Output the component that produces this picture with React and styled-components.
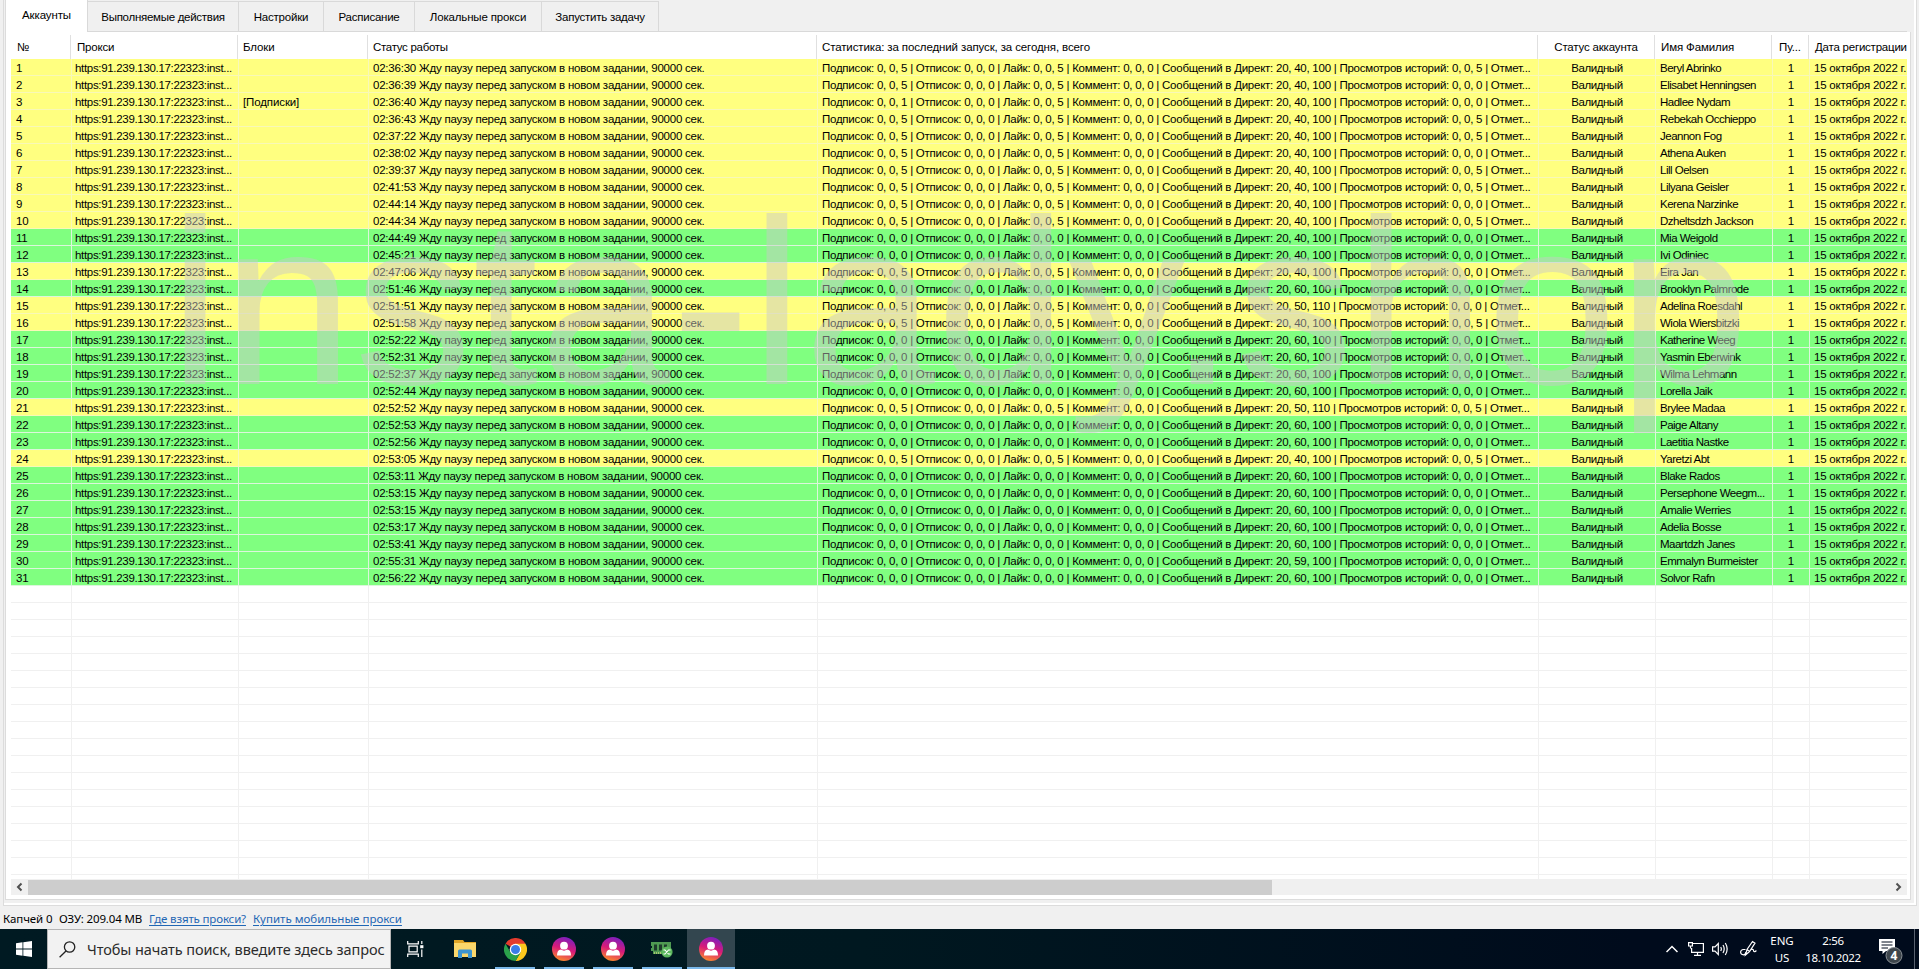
import React from "react";
import styled, { createGlobalStyle } from "styled-components";

const colors = {
  face: "#f0f0f0",
  line: "#dcdcdc",
  yellow: "#ffff80",
  green: "#80ff80",
  link: "#1f66b4",
};

const GlobalStyle = createGlobalStyle`
  * {
    box-sizing: border-box;
  }
  body {
    margin: 0;
    overflow: hidden;
    background: ${colors.face};
    color: #000;
    font-family: "Liberation Sans", Arial, sans-serif;
    font-size: 11.5px;
  }
`;

const Desktop = styled.div`
  position: relative;
  display: flex;
  flex-direction: column;
  width: 1919px;
  height: 969px;
  background: ${colors.face};
`;

const Frame = styled.div`
  height: 906px;
  margin: 0 2px 0 3px;
  padding-left: 1px;
  border: 1px solid ${colors.line};
  border-top: none;
  box-shadow: inset -2px -2px 0 #fff;
`;

const TabStrip = styled.div`
  display: flex;
  align-items: flex-end;
  height: 32px;
`;

const Tab = styled.div`
  display: flex;
  align-items: center;
  justify-content: center;
  width: ${(p) => p.$width}px;
  height: 31px;
  border: 1px solid #d9d9d9;
  border-left: none;
  letter-spacing: ${(p) => p.$spacing || 0}px;
  white-space: nowrap;
`;

const ActiveTab = styled(Tab)`
  height: 32px;
  padding-bottom: 2px;
  background: #fff;
  border: none;
  border-left: 1px solid ${colors.line};
  border-right: 1px solid #d9d9d9;
`;

const TabFill = styled.div`
  width: 1248px;
  border-bottom: 1px solid #d9d9d9;
`;

const Panel = styled.div`
  width: 1906px;
  height: 868px;
  padding: 3px 3px 0 5px;
  background: #fff;
  border: 1px solid ${colors.line};
  border-top: none;
`;

const columns = "60px 167px 130px 449px 721px 117px 117px 37px 98px";

const HeaderRow = styled.div`
  display: grid;
  grid-template-columns: ${columns};
  height: 24px;
`;

const HeaderCell = styled.div`
  padding-left: ${(p) => (p.$center ? 0 : p.$pad || 6)}px;
  border-right: 1px solid #e0e0e0;
  line-height: 24px;
  letter-spacing: ${(p) => p.$spacing || -0.12}px;
  text-align: ${(p) => (p.$center ? "center" : "left")};
  white-space: nowrap;
  overflow: hidden;
  &:last-child {
    border-right: none;
  }
`;

const Body = styled.div`
  height: 820px;
  overflow: hidden;
`;

const Row = styled.div`
  display: grid;
  grid-template-columns: ${columns};
  height: 17px;
  background: ${(p) => colors[p.$tone] || "#fff"};
  --grid: ${(p) =>
    p.$tone === "yellow" ? "#f8f8b8" : p.$tone ? "#dcf6dc" : "#f0f0f0"};
  border-bottom: 1px solid var(--grid);
`;

const Cell = styled.div`
  height: 16px;
  padding-top: 1px;
  padding-left: ${(p) => (p.$center ? 0 : p.$pad || 4)}px;
  border-left: 1px solid var(--grid);
  line-height: 17px;
  letter-spacing: ${(p) => p.$spacing || 0}px;
  text-align: ${(p) => (p.$center ? "center" : "left")};
  white-space: nowrap;
  overflow: hidden;
  &:first-child {
    border-left: none;
  }
`;

const ScrollBar = styled.div`
  display: flex;
  align-items: center;
  width: 1896px;
  height: 16px;
  background: ${colors.face};
`;

const ScrollArrow = styled.svg`
  width: 17px;
  height: 16px;
  fill: none;
  stroke: #505050;
  stroke-width: 2;
`;

const ScrollThumb = styled.div`
  width: 1244px;
  height: 15px;
  margin-right: auto;
  background: #cdcdcd;
`;

const Watermark = styled.div`
  position: absolute;
  left: 169px;
  top: 168px;
  color: rgba(200, 200, 200, 0.48);
  font-size: 235px;
  line-height: 270px;
  letter-spacing: 1.2px;
  white-space: nowrap;
  pointer-events: none;
`;

const StatusBar = styled.div`
  display: flex;
  align-items: center;
  height: 23px;
  padding: 2px 0 0 3px;
  font-family: "Noto Sans", "Open Sans", sans-serif;
  font-size: 11.5px;
`;

const StatusText = styled.span`
  width: ${(p) => p.$width}px;
  letter-spacing: ${(p) => p.$spacing || 0}px;
  white-space: nowrap;
`;

const StatusLink = styled(StatusText)`
  color: ${colors.link};
  text-decoration: underline;
  text-underline-offset: 2px;
`;

const TaskBar = styled.div`
  display: flex;
  height: 40px;
  background: linear-gradient(90deg, #001a22, #001820 45%, #000b1c 85%);
  color: #fff;
  font-family: "Noto Sans", "Open Sans", sans-serif;
`;

const StartButton = styled.div`
  display: flex;
  align-items: center;
  justify-content: center;
  width: 47px;
`;

const SearchBox = styled.div`
  display: flex;
  align-items: center;
  width: 344px;
  padding-left: 11px;
  border: 1px solid #b5b5b5;
  background: #f2f2f2;
  color: #2b2b2b;
  font-size: 14.5px;
  letter-spacing: -0.08px;
  white-space: nowrap;
  svg {
    flex: none;
    margin-right: 11px;
  }
`;

const TaskButton = styled.div`
  display: flex;
  align-items: center;
  justify-content: center;
  width: 48px;
  margin-right: 2px;
  background: ${(p) => (p.$active ? "#33464f" : "transparent")};
`;

const RunningButton = styled(TaskButton)`
  width: ${(p) => (p.$active ? 48 : 40)}px;
  margin: ${(p) => (p.$active ? "0" : "0 5px 0 4px")};
  border-bottom: 2px solid #7ab8ea;
  padding-top: 2px;
`;

const Tray = styled.div`
  display: flex;
  align-items: center;
  margin-left: auto;
`;

const TrayIcon = styled.svg`
  flex: none;
  width: ${(p) => p.$width}px;
  height: 18px;
  margin-right: ${(p) => p.$gap}px;
  fill: none;
  stroke: #fff;
  stroke-width: 1.2;
`;

const TrayText = styled.div`
  width: ${(p) => p.$width}px;
  font-size: 11.5px;
  line-height: 17.5px;
  text-align: center;
  letter-spacing: ${(p) => p.$spacing}px;
`;

const Notifications = styled.svg`
  width: 26px;
  height: 30px;
  margin: 4px 10px 0 8px;
`;

const ShowDesktop = styled.div`
  width: 5px;
  height: 40px;
  border-left: 1px solid #596270;
`;

const tabs = [
  ["Выполняемые действия", 151, -0.28],
  ["Настройки", 85, -0.2],
  ["Расписание", 91, -0.25],
  ["Локальные прокси", 127, -0.15],
  ["Запустить задачу", 117, -0.25],
];

// time, tone, likes, direct, stories, name
const accounts = [
  ["02:36:30", "yellow", 5, "20, 40, 100", 5, "Beryl Abrinko"],
  ["02:36:39", "yellow", 5, "20, 40, 100", 0, "Elisabet Henningsen"],
  ["02:36:40", "yellow", 5, "20, 40, 100", 0, "Hadlee Nydam"],
  ["02:36:43", "yellow", 5, "20, 40, 100", 5, "Rebekah Occhieppo"],
  ["02:37:22", "yellow", 5, "20, 40, 100", 5, "Jeannon Fog"],
  ["02:38:02", "yellow", 5, "20, 40, 100", 0, "Athena Auken"],
  ["02:39:37", "yellow", 5, "20, 40, 100", 5, "Lill Oelsen"],
  ["02:41:53", "yellow", 5, "20, 40, 100", 5, "Lilyana Geisler"],
  ["02:44:14", "yellow", 5, "20, 40, 100", 0, "Kerena Narzinke"],
  ["02:44:34", "yellow", 5, "20, 40, 100", 5, "Dzheltsdzh Jackson"],
  ["02:44:49", "green", 0, "20, 40, 100", 0, "Mia Weigold"],
  ["02:45:21", "green", 0, "20, 40, 100", 0, "Ivi Odiniec"],
  ["02:47:06", "yellow", 5, "20, 40, 100", 0, "Eira Jan"],
  ["02:51:46", "green", 0, "20, 60, 100", 0, "Brooklyn Palmrode"],
  ["02:51:51", "yellow", 5, "20, 50, 110", 0, "Adelina Roesdahl"],
  ["02:51:58", "yellow", 5, "20, 40, 100", 5, "Wiola Wiersbitzki"],
  ["02:52:22", "green", 0, "20, 60, 100", 0, "Katherine Weeg"],
  ["02:52:31", "green", 0, "20, 60, 100", 0, "Yasmin Eberwink"],
  ["02:52:37", "green", 0, "20, 60, 100", 0, "Wilma Lehmann"],
  ["02:52:44", "green", 0, "20, 60, 100", 0, "Lorella Jaik"],
  ["02:52:52", "yellow", 5, "20, 50, 110", 5, "Brylee Madaa"],
  ["02:52:53", "green", 0, "20, 60, 100", 0, "Paige Altany"],
  ["02:52:56", "green", 0, "20, 60, 100", 0, "Laetitia Nastke"],
  ["02:53:05", "yellow", 5, "20, 40, 100", 5, "Yaretzi Abt"],
  ["02:53:11", "green", 0, "20, 60, 100", 0, "Blake Rados"],
  ["02:53:15", "green", 0, "20, 60, 100", 0, "Persephone Weegm..."],
  ["02:53:15", "green", 0, "20, 60, 100", 0, "Amalie Werries"],
  ["02:53:17", "green", 0, "20, 60, 100", 0, "Adelia Bosse"],
  ["02:53:41", "green", 0, "20, 60, 100", 0, "Maartdzh Janes"],
  ["02:55:31", "green", 0, "20, 59, 100", 0, "Emmalyn Burmeister"],
  ["02:56:22", "green", 0, "20, 60, 100", 0, "Solvor Rafn"],
];

const emptyRows = Array.from({ length: 18 });

const AccountRow = ({ account, number }) => {
  const [time, tone, likes, direct, stories, name] = account;
  const follows = number === 3 ? 1 : likes;
  return (
    <Row $tone={tone}>
      <Cell $pad={5} $spacing={-0.2}>{number}</Cell>
      <Cell $pad={3} $spacing={-0.32}>https:91.239.130.17:22323:inst...</Cell>
      <Cell $spacing={-0.12}>{number === 3 ? "[Подписки]" : ""}</Cell>
      <Cell $spacing={-0.22}>
        {time} Жду паузу перед запуском в новом задании, 90000 сек.
      </Cell>
      <Cell $spacing={-0.25}>
        Подписок: 0, 0, {follows} | Отписок: 0, 0, 0 | Лайк: 0, 0, {likes} |
        Коммент: 0, 0, 0 | Сообщений в Директ: {direct} | Просмотров историй:
        0, 0, {stories} | Отмет...
      </Cell>
      <Cell $center $spacing={-0.45}>Валидный</Cell>
      <Cell $spacing={-0.5}>{name}</Cell>
      <Cell $center>1</Cell>
      <Cell $spacing={-0.22}>15 октября 2022 г.</Cell>
    </Row>
  );
};

const WindowsLogo = () => (
  <svg width="16" height="16" viewBox="0 0 16 16" fill="#fff">
    <path d="M0 2.2 6.5 1.3V7.5H0ZM7.3 1.2 16 0V7.5H7.3ZM0 8.4H6.5V14.7L0 13.8ZM7.3 8.4H16V16L7.3 14.8Z" />
  </svg>
);

const SearchIcon = () => (
  <svg width="17" height="17" viewBox="0 0 17 17" fill="none" stroke="#222" strokeWidth="1.3">
    <circle cx="10.6" cy="6" r="5.2" />
    <path d="M7 10 .6 16.2" />
  </svg>
);

const TaskViewIcon = () => (
  <svg width="17" height="16" viewBox="0 0 17 16" fill="none" stroke="#fff" strokeWidth="1.2">
    <path d="M.7 0V2.8H11.3V0M.7 16V13.2H11.3V16M2 5.2H10.2V10.8H2ZM14.8 0V3M14.8 8.5V16" />
    <path d="M13.2 4.2h3.2v3h-3.2Z" fill="#fff" stroke="none" />
  </svg>
);

const ExplorerIcon = () => (
  <svg width="22" height="18" viewBox="0 0 22 18">
    <path d="M0 0H9L10.5 2H22V17H0Z" fill="#e0a526" />
    <path d="M0 3H22V17H0Z" fill="#fbd76b" />
    <path d="M4 18V11Q4 9.5 5.5 9.5H16.5Q18 9.5 18 11V18H14V13.5H8V18Z" fill="#3d94cf" />
  </svg>
);

const ChromeIcon = () => (
  <svg width="23" height="23" viewBox="0 0 24 24">
    <path d="M12 12 1.6 6A12 12 0 0 1 22.4 6Z" fill="#e33b2e" />
    <path d="M12 12V6H22.4A12 12 0 0 1 12 24L17.2 15Z" fill="#fcc81d" />
    <path d="M12 12 17.2 15 12 24A12 12 0 0 1 1.6 6L6.8 15Z" fill="#2aa14b" />
    <circle cx="12" cy="12" r="6" fill="#fff" />
    <circle cx="12" cy="12" r="4.7" fill="#3b7de8" />
  </svg>
);

const ProfileIcon = () => (
  <svg width="24" height="24" viewBox="0 0 24 24">
    <defs>
      <linearGradient id="insta" x1="0.65" y1="0" x2="0.35" y2="1">
        <stop offset="0" stopColor="#7a1fc0" />
        <stop offset="0.5" stopColor="#d81b78" />
        <stop offset="1" stopColor="#fb8a2c" />
      </linearGradient>
    </defs>
    <circle cx="12" cy="12" r="12" fill="url(#insta)" />
    <circle cx="12" cy="8.7" r="3.9" fill="#fff" />
    <path d="M5 18.6Q5 12.6 9 12.6Q12 14.8 15 12.6Q19 12.6 19 18.6Z" fill="#fff" />
  </svg>
);

const MemoryIcon = () => (
  <svg width="22" height="17" viewBox="0 0 22 17">
    <path d="M0 1H20V13H2V10H0V7H1V5H0Z" fill="#4f9a52" />
    <path d="M3 3.5H6V9.5H3ZM8 3.5H11V9.5H8ZM13 3.5H16V9.5H13Z" fill="#1d3a2b" />
    <path d="M3 12H11" stroke="#c6cf7a" strokeWidth="1.5" strokeDasharray="1 1" />
    <circle cx="16" cy="11" r="5.6" fill="#5cb85e" />
    <path d="M12.5 9H14L17.5 13H19.5M12.5 13H14L17.5 9H19.5" stroke="#fff" strokeWidth="1.1" fill="none" />
  </svg>
);

const App = () => {
  return (
    <>
      <GlobalStyle />
      <Desktop>
        <Frame>
          <TabStrip>
            <ActiveTab $width={83} $spacing={-0.1}>Аккаунты</ActiveTab>
            {tabs.map(([label, width, spacing]) => (
              <Tab key={label} $width={width} $spacing={spacing}>
                {label}
              </Tab>
            ))}
            <TabFill />
          </TabStrip>
          <Panel>
            <HeaderRow>
              <HeaderCell>№</HeaderCell>
              <HeaderCell $spacing={-0.2}>Прокси</HeaderCell>
              <HeaderCell $pad={5}>Блоки</HeaderCell>
              <HeaderCell $pad={5} $spacing={-0.3}>Статус работы</HeaderCell>
              <HeaderCell $pad={5}>
                Статистика: за последний запуск, за сегодня, всего
              </HeaderCell>
              <HeaderCell $center $spacing={-0.18}>Статус аккаунта</HeaderCell>
              <HeaderCell>Имя Фамилия</HeaderCell>
              <HeaderCell $center>Пу...</HeaderCell>
              <HeaderCell $spacing={-0.22}>Дата регистрации</HeaderCell>
            </HeaderRow>
            <Body>
              {accounts.map((account, i) => (
                <AccountRow key={i} account={account} number={i + 1} />
              ))}
              {emptyRows.map((_, i) => (
                <Row key={i}>
                  <Cell />
                  <Cell />
                  <Cell />
                  <Cell />
                  <Cell />
                  <Cell />
                  <Cell />
                  <Cell />
                  <Cell />
                </Row>
              ))}
            </Body>
            <ScrollBar>
              <ScrollArrow viewBox="0 0 17 16">
                <path d="M10.5 4.5 7 8 10.5 11.5" />
              </ScrollArrow>
              <ScrollThumb />
              <ScrollArrow viewBox="0 0 17 16">
                <path d="M6.5 4.5 10 8 6.5 11.5" />
              </ScrollArrow>
            </ScrollBar>
          </Panel>
        </Frame>
        <Watermark>insta-lady.shop</Watermark>
        <StatusBar>
          <StatusText $width={56} $spacing={-0.1}>Капчей 0</StatusText>
          <StatusText $width={90} $spacing={-0.15}>ОЗУ: 209.04 MB</StatusText>
          <StatusLink $width={104} $spacing={-0.15}>Где взять прокси?</StatusLink>
          <StatusLink>Купить мобильные прокси</StatusLink>
        </StatusBar>
        <TaskBar>
          <StartButton>
            <WindowsLogo />
          </StartButton>
          <SearchBox>
            <SearchIcon />
            Чтобы начать поиск, введите здесь запрос
          </SearchBox>
          <TaskButton>
            <TaskViewIcon />
          </TaskButton>
          <TaskButton>
            <ExplorerIcon />
          </TaskButton>
          <RunningButton>
            <ChromeIcon />
          </RunningButton>
          <RunningButton>
            <ProfileIcon />
          </RunningButton>
          <RunningButton>
            <ProfileIcon />
          </RunningButton>
          <RunningButton>
            <MemoryIcon />
          </RunningButton>
          <RunningButton $active>
            <ProfileIcon />
          </RunningButton>
          <Tray>
            <TrayIcon $width={12} $gap={10} viewBox="0 0 12 18">
              <path d="M.5 12 6 6.5 11.5 12" strokeWidth="1.5" />
            </TrayIcon>
            <TrayIcon $width={16} $gap={8} viewBox="0 0 16 18">
              <path d="M4 3.5H15.4V12.4H3.6V8M9.5 12.4V15.4M6 15.4H13M.6 2.6H4.4V6H.6ZM2.5 6V8.5" />
            </TrayIcon>
            <TrayIcon $width={17} $gap={11} viewBox="0 0 17 18">
              <path d="M.6 6.8H3L6.3 3.5V14.5L3 11.2H.6ZM8.7 7Q10 9 8.7 11M11 5Q13.4 9 11 13M13.3 3Q17 9 13.3 15" />
            </TrayIcon>
            <TrayIcon $width={17} $gap={11} viewBox="0 0 17 18">
              <path d="M5.5 15 7 9.5 12.5 1.5 15 3.2 9.5 11.5ZM7 9.5 9.5 11.5M5.5 9.5H3Q.6 10 .6 12.3Q.8 14.8 3.5 14.8Q6 14.5 5.8 12M11.5 9.5Q14 9 13.5 11Q14.5 12.5 16.4 10.5" />
            </TrayIcon>
            <TrayText $width={28} $spacing={0}>
              ENG
              <br />
              US
            </TrayText>
            <TrayText $width={74} $spacing={-0.35}>
              2:56
              <br />
              18.10.2022
            </TrayText>
            <Notifications viewBox="0 0 26 30">
              <path d="M1 3H17V15H8L4.5 18V15H1Z" fill="#fff" />
              <path d="M3.5 6H14.5M3.5 9H14.5M3.5 12H10" stroke="#000b1c" />
              <circle cx="16" cy="19.5" r="8" fill="#3e464c" stroke="#8a9095" />
              <text x="16" y="24" fill="#fff" fontSize="12" fontWeight="bold" textAnchor="middle">
                4
              </text>
            </Notifications>
            <ShowDesktop />
          </Tray>
        </TaskBar>
      </Desktop>
    </>
  );
};

export default App;
